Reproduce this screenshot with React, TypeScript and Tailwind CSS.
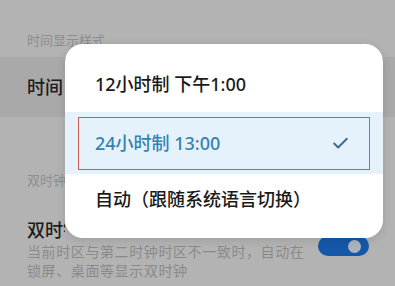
import { Check } from 'lucide-react';

const font = { fontFamily: '"Noto Sans", "Noto Sans CJK SC", sans-serif' };

export default function App() {
  return (
    <div className="relative w-[395px] h-[286px] overflow-hidden bg-[#b3b3b3]" style={font}>
      {/* dimmed settings page behind the dialog */}
      <div className="flex flex-col">
        <div className="h-[57px] pl-[27px] pt-[31px] text-[13px] leading-[18px] text-[#8d8d8d]">时间显示样式</div>
        <div className="h-[60px] bg-[#a9a9a9] pl-[27px] flex items-center">
          <span className="text-[18px] font-medium text-[#1c1c1c] mt-[1px]">时间</span>
        </div>
        <div className="h-[54px]" />
        <div className="pl-[27px] text-[13px] leading-[18px] text-[#8d8d8d]">双时钟</div>
        <div className="flex items-start justify-between pl-[27px] pr-[26px] mt-[30px]">
          <div className="flex flex-col">
            <span className="text-[18px] leading-[22px] font-medium text-[#1c1c1c] w-[38px] overflow-hidden whitespace-nowrap">双时钟</span>
            <span className="text-[14px] leading-[19px] tracking-[0.6px] text-[#8a8a8a] mt-[1px] w-[285px]">
              当前时区与第二时钟时区不一致时，自动在锁屏、桌面等显示双时钟
            </span>
          </div>
          <div className="mt-[17px] w-[51px] h-[20px] rounded-full bg-[#1557a8] flex items-center justify-end pr-[8px]">
            <div className="w-[13px] h-[13px] rounded-full bg-[#aab4bf]" />
          </div>
        </div>
      </div>

      {/* dialog */}
      <div className="absolute left-[65px] top-[44px] w-[318px] h-[194px] rounded-[18px] bg-white shadow-[0_2px_10px_rgba(0,0,0,0.12)] flex flex-col pt-[12px] pb-[14px]">
        <div className="h-[56px] flex items-center pl-[30px] text-[18px] font-medium text-[#1a1a1a]">
          12小时制 下午1:00
        </div>
        <div className="h-[62px] bg-[#e6f2fb] px-[13px] pt-[5px] pb-[4px]">
          <div className="h-full border border-[#cf5a5a] flex items-center justify-between pl-[16px] pr-[19px]">
            <span className="text-[18px] font-medium text-[#3283b3]">24小时制 13:00</span>
            <Check size={19} strokeWidth={2.4} className="text-[#3a6c8e]" />
          </div>
        </div>
        <div className="h-[50px] flex items-center pl-[30px] text-[18px] font-medium text-[#1a1a1a]">
          自动（跟随系统语言切换）
        </div>
      </div>
    </div>
  );
}
